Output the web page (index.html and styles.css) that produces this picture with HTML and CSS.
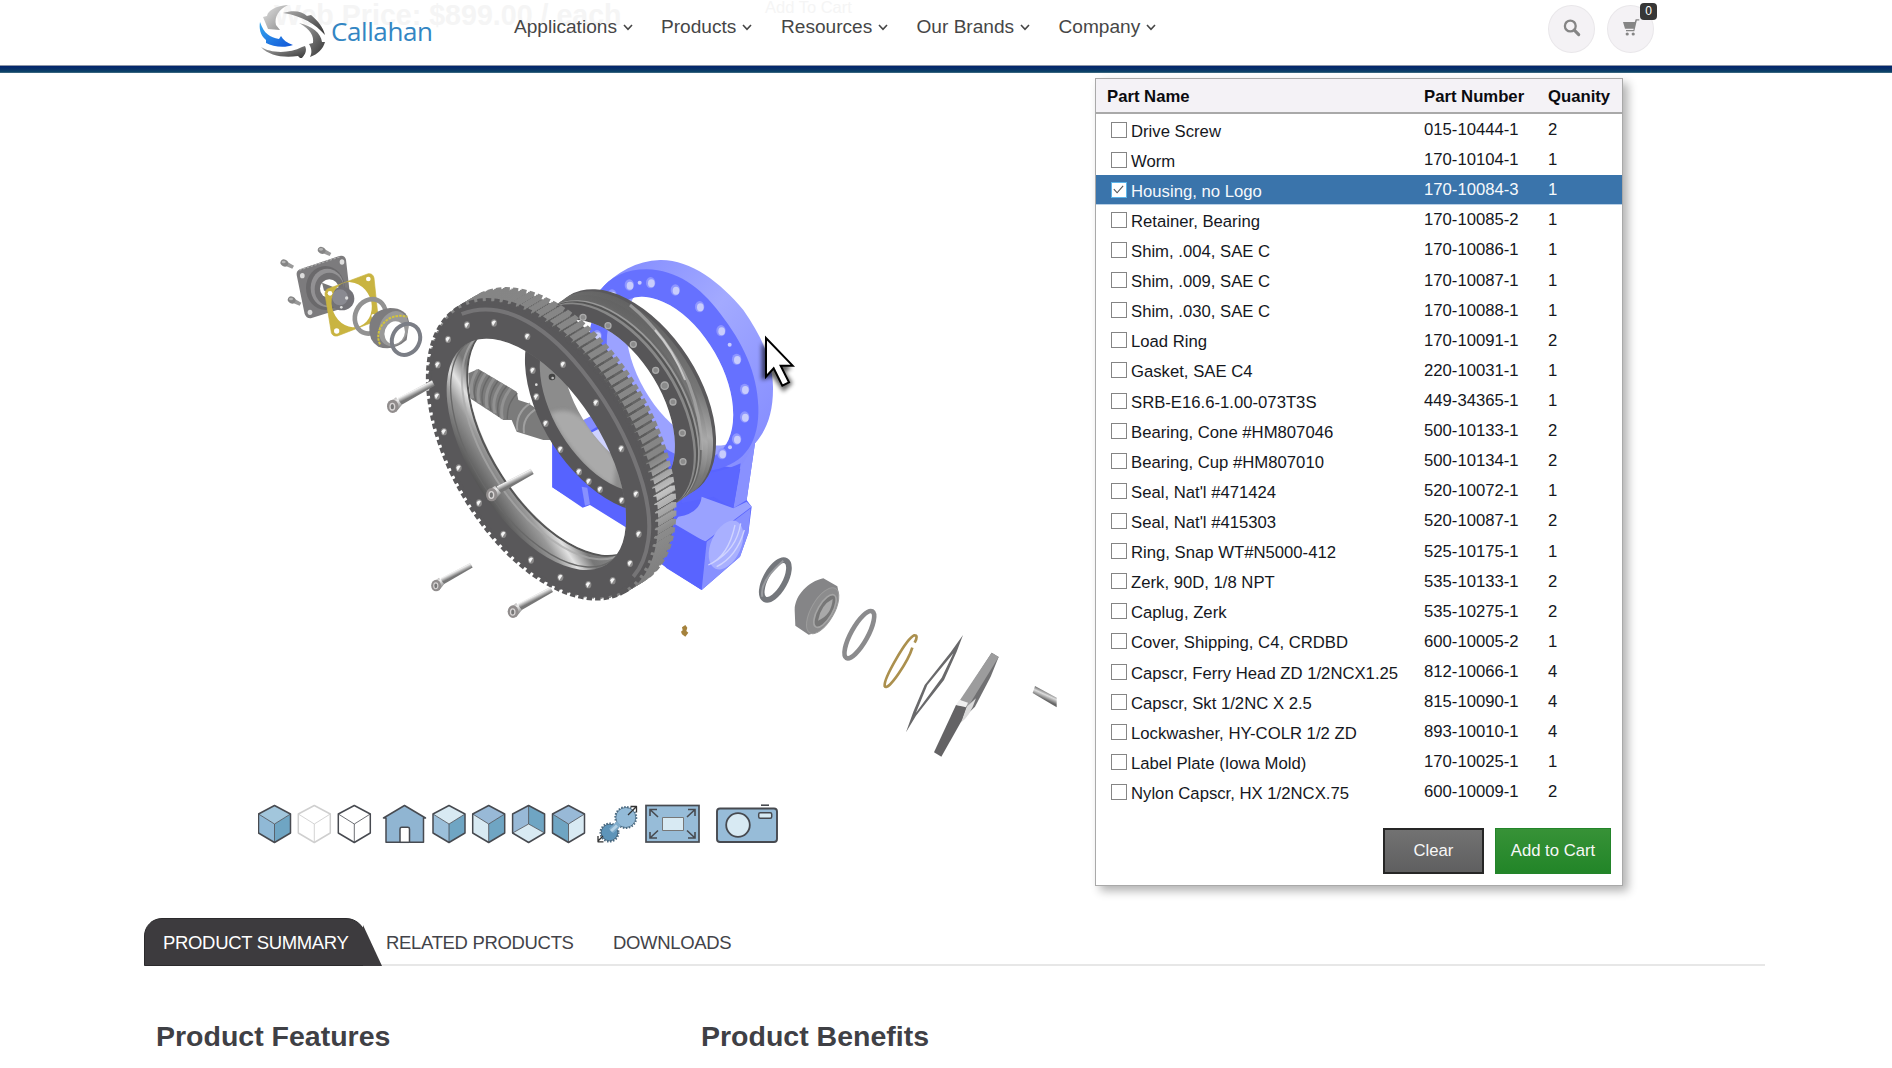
FILE: index.html
```html
<!DOCTYPE html>
<html lang="en">
<head>
<meta charset="utf-8">
<title>Callahan - Product Parts</title>
<link rel="stylesheet" href="styles.css">
</head>
<body>
<header class="site-header">
  <div class="ghost ghost-price">Web Price: $899.00 / each</div>
  <div class="ghost ghost-cart">Add To Cart</div>
  <a class="logo">
    <svg class="logo-mark" viewBox="0 0 68 54">
      <defs>
        <linearGradient id="lg1" x1="0" y1="0" x2="1" y2="1"><stop offset="0" stop-color="#e2e2e2"/><stop offset="1" stop-color="#8a8a8a"/></linearGradient>
        <linearGradient id="lg2" x1="0" y1="0" x2="1" y2="1"><stop offset="0" stop-color="#aaa"/><stop offset="1" stop-color="#333"/></linearGradient>
        <linearGradient id="lg3" x1="0" y1="0" x2="1" y2="1"><stop offset="0" stop-color="#35a8ef"/><stop offset="1" stop-color="#1255d8"/></linearGradient>
      </defs>
      <path d="M29 1C17 2 9 6 8 12L4 13 9 25 21 26 17 21C15 13 20 5 29 1Z" fill="url(#lg1)"/>
      <path d="M24 9C34 6 43 7 48 12L52 11C59 17 64 23 66 31C56 20 44 12 24 9Z" fill="url(#lg2)"/>
      <path d="M40 19C52 26 55 32 54 39L50 40C53 45 53 49 51 53C59 50 64 45 66 38L63 38C62 29 53 22 40 19Z" fill="url(#lg2)"/>
      <path d="M1 18C5 30 11 33 20 35L22 32C24 36 28 39 34 41C26 44 14 43 7 39L7 36C1 31 0 24 1 18Z" fill="url(#lg3)"/>
      <path d="M2 43C11 49 30 50 43 43L46 42C48 46 47 50 42 55L39 52C25 54 10 52 2 43Z" fill="url(#lg2)"/>
    </svg>
    <span class="logo-text">Callahan</span>
  </a>
  <nav class="nav">
    <a class="w1">Applications<svg viewBox="0 0 10 7"><path d="M1 1l4 4.3L9 1"/></svg></a>
    <a class="w2">Products<svg viewBox="0 0 10 7"><path d="M1 1l4 4.3L9 1"/></svg></a>
    <a class="w3">Resources<svg viewBox="0 0 10 7"><path d="M1 1l4 4.3L9 1"/></svg></a>
    <a class="w4">Our Brands<svg viewBox="0 0 10 7"><path d="M1 1l4 4.3L9 1"/></svg></a>
    <a class="w5">Company<svg viewBox="0 0 10 7"><path d="M1 1l4 4.3L9 1"/></svg></a>
  </nav>
  <div class="tools">
    <a class="round"><svg width="18" height="18" viewBox="0 0 18 18"><circle cx="7.3" cy="7" r="5.4" fill="none" stroke="#858585" stroke-width="2.3"/><path d="M11.3 11.2l4.4 4.4" stroke="#858585" stroke-width="3.1" stroke-linecap="round"/></svg></a>
    <a class="round"><svg width="18" height="18" viewBox="0 0 18 18"><path d="M1 3h11.800l.9-2.800h3.600v1.300h-2.500L12.300 12.300H4v-1.300h7.400l.3-1.200H3z" fill="#858585"/><circle cx="5.200" cy="15" r="1.600" fill="#858585"/><circle cx="11.200" cy="15" r="1.600" fill="#858585"/></svg><span class="badge">0</span></a>
  </div>
</header>

<main class="stage">
  <section class="viewer">
    <svg class="model" viewBox="240 73 830 712">
      <defs>
        <linearGradient id="bore" x1="0" y1="0" x2="0" y2="1"><stop offset="0" stop-color="#5d5d5d"/><stop offset=".3" stop-color="#8d8d8d"/><stop offset=".58" stop-color="#777"/><stop offset=".7" stop-color="#e2e2e2"/><stop offset=".8" stop-color="#999"/><stop offset="1" stop-color="#555"/></linearGradient>
        <linearGradient id="bore2" gradientUnits="userSpaceOnUse" x1="-200" y1="-150" x2="60" y2="250"><stop offset="0" stop-color="#777"/><stop offset=".35" stop-color="#8a8a8a"/><stop offset=".6" stop-color="#d0d0d0"/><stop offset=".8" stop-color="#8a8a8a"/><stop offset="1" stop-color="#777"/></linearGradient>
        <linearGradient id="side" x1="0" y1="0" x2="1" y2="1"><stop offset="0" stop-color="#555"/><stop offset=".35" stop-color="#777"/><stop offset=".5" stop-color="#aaa"/><stop offset=".65" stop-color="#777"/><stop offset="1" stop-color="#606060"/></linearGradient>
        <linearGradient id="teeth" x1="0" y1="0" x2="1" y2="0"><stop offset="0" stop-color="#858585"/><stop offset=".4" stop-color="#888"/><stop offset=".7" stop-color="#858585"/><stop offset=".8" stop-color="#c2c2c2"/><stop offset=".9" stop-color="#8c8c8c"/><stop offset="1" stop-color="#808080"/></linearGradient>
        <linearGradient id="bolt" x1="0" y1="0" x2=".5" y2="1"><stop offset="0" stop-color="#8c8888"/><stop offset=".45" stop-color="#eee"/><stop offset="1" stop-color="#777"/></linearGradient>
        <linearGradient id="shank" gradientUnits="userSpaceOnUse" x1="60" y1="-54" x2="70" y2="-34"><stop offset="0" stop-color="#858181"/><stop offset=".4" stop-color="#f2f2f2"/><stop offset="1" stop-color="#777"/></linearGradient>
        <linearGradient id="stub" gradientUnits="userSpaceOnUse" x1="982" y1="486" x2="972" y2="508"><stop offset="0" stop-color="#777"/><stop offset=".4" stop-color="#ddd"/><stop offset="1" stop-color="#666"/></linearGradient>
        <linearGradient id="blueside" x1="0" y1="0" x2="1" y2="1"><stop offset="0" stop-color="#7f88ff"/><stop offset=".45" stop-color="#a3aaff"/><stop offset="1" stop-color="#8088ff"/></linearGradient>
        <filter id="soft" x="-50%" y="-50%" width="200%" height="200%"><feGaussianBlur stdDeviation="7"/></filter>

        <ellipse id="gOut" rx="490" ry="270" transform="rotate(59.800)"/>
        <ellipse id="gIn" rx="392" ry="198" transform="rotate(57.400)"/>
        <ellipse id="rOut" rx="348" ry="201" transform="rotate(57.200)"/>
        <ellipse id="rIn" rx="285" ry="162" transform="rotate(58.700)"/>
        <ellipse id="bIn" rx="268" ry="155" transform="rotate(60)"/>
        <clipPath id="gClip"><use href="#gIn" x="409" y="643"/></clipPath>
        <clipPath id="rClip"><use href="#rIn" x="622" y="498"/></clipPath>
        <clipPath id="bClip"><use href="#bIn" x="810" y="415"/></clipPath>
        <mask id="gMask" maskUnits="userSpaceOnUse" x="0" y="0" width="1300" height="1200"><rect width="1300" height="1200" fill="#fff"/><g clip-path="url(#gClip)"><use href="#gIn" x="474" y="598" fill="#000"/></g></mask>
        <mask id="rMask" maskUnits="userSpaceOnUse" x="0" y="0" width="1300" height="1200"><rect width="1300" height="1200" fill="#fff"/><g clip-path="url(#rClip)"><use href="#rIn" x="687" y="453" fill="#000"/></g></mask>
        <mask id="bMask" maskUnits="userSpaceOnUse" x="0" y="0" width="1300" height="1200"><rect width="1300" height="1200" fill="#fff"/><g clip-path="url(#bClip)"><use href="#bIn" x="868" y="372" fill="#000"/></g></mask>
        <mask id="gasket" maskUnits="userSpaceOnUse" x="200" y="100" width="300" height="300"><rect x="200" y="100" width="300" height="300" fill="#fff"/><ellipse cx="335" cy="254" rx="69" ry="59" transform="rotate(68 335 254)" fill="#000"/></mask>
        <g id="hole"><ellipse rx="9" ry="11" fill="#8a8989"/><path d="M-7-1a8 9 0 0 1 13-4L-3 9z" fill="#f4f4f4"/></g>
        <g id="bhole"><ellipse rx="14" ry="17" fill="#8e96ff"/><ellipse cx="2" cy="2" rx="10" ry="12" fill="#c9cdfc"/></g>
        <g id="screw"><path d="M14-22l102-53 8 16-104 60z" fill="url(#shank)"/><path d="M-16-6L8-24l18 22L8 20z" fill="url(#bolt)"/><ellipse cx="-2" cy="3" rx="17" ry="20" fill="#918d8d"/><ellipse cx="-3" cy="4" rx="9" ry="12" fill="#d8d5d5"/><ellipse cx="-3" cy="4" rx="5" ry="8" fill="#777"/></g>
        <g id="pin"><path d="M3-7l26 15-5 9L-3 6z" fill="#999"/><ellipse rx="12" ry="10" transform="rotate(30)" fill="#858585"/><ellipse cx="-2" cy="-3" rx="6" ry="4" fill="#b5b5b5"/></g>
      </defs>

      <g transform="translate(400 240) scale(.33333)">
        <!-- gearbox housing -->
        <g mask="url(#bMask)">
          <path d="M457 600L580 525 810 540 1090 570 1065 610 1040 780 1055 800 1045 880 1020 950 905 1050 800 985 675 860 570 795 548 803 457 742Z" fill="#5964ff"/>
          <path d="M457 600L580 525 640 600 560 650 550 800 457 742Z" fill="#5663ff"/>
          <path d="M520 555L580 525 600 555 550 585Z" fill="#848cff"/>
          <path d="M550 590L600 565 660 640 640 690Z" fill="#ced2ff"/>
          <path d="M545 740l10 57 15-4-8-50z" fill="#8790ff"/>
          <path d="M600 150C650 95 710 62 780 60C870 58 960 125 1030 210C1090 295 1118 370 1119 440C1120 520 1100 570 1065 610L1040 690 800 650Z" fill="url(#blueside)"/>
          <path d="M600 152C630 110 680 88 740 88C830 90 900 140 960 220C1030 310 1072 400 1075 500C1078 600 1040 670 940 690L740 660C620 560 560 400 570 265Z" fill="#6671ff"/>
          <use href="#bIn" x="810" y="415" fill="#9ba2ff"/>
          <path d="M1065 610L1040 780 1000 805 1022 680Z" fill="#8991ff"/>
          <path d="M840 690C900 715 980 690 1022 670L1000 805 940 770 845 790Z" fill="#5c67ff"/>
          <path d="M835 830Q900 820 905 770L1000 805 1040 785 1055 800 915 905 820 850Z" fill="#9aa2ff"/>
          <path d="M780 850L920 905 905 1050 780 970Z" fill="#5964ff"/>
          <path d="M920 905L1052 805 1045 880 1020 950 905 1050Z" fill="#8790ff"/>
          <ellipse cx="978" cy="915" rx="45" ry="78" transform="rotate(24 978 915)" fill="#a9b0ff"/>
          <path d="M935 970Q1010 930 1022 850M925 975Q985 950 1005 855M950 980Q1010 950 1033 870" fill="none" stroke="#d0d4ff" stroke-width="4"/>
        </g>
        <use href="#bhole" x="688" y="135"/><use href="#bhole" x="752" y="128"/><use href="#bhole" x="826" y="150"/><use href="#bhole" x="899" y="200"/><use href="#bhole" x="963" y="272"/><use href="#bhole" x="1010" y="358"/><use href="#bhole" x="1034" y="448"/><use href="#bhole" x="1034" y="531"/><use href="#bhole" x="1010" y="597"/><use href="#bhole" x="966" y="641"/><use href="#bhole" x="591" y="287"/><use href="#bhole" x="636" y="165"/>
        <g fill="#c6caff"><circle cx="719" cy="128" r="6"/><circle cx="989" cy="314" r="6"/><circle cx="990" cy="622" r="6"/></g>

        <!-- worm shaft -->
        <path d="M205 400L235 387 350 455 355 480 385 490 430 520 470 600 430 600 350 575 335 540 310 540 210 475Z" fill="#7b7b7b"/>
        <path d="M232 390Q205 430 218 475M257 400Q225 445 238 490M282 415Q250 460 262 505M307 430Q272 475 285 520M332 445Q297 490 307 537" fill="none" stroke="#919191" stroke-width="9"/>
        <path d="M244 394Q214 440 227 482M269 408Q237 452 249 496M294 423Q260 468 273 512M320 438Q284 482 296 530M352 460Q320 490 322 538" fill="none" stroke="#686868" stroke-width="4"/>
        <path d="M390 490Q345 520 352 572M412 505Q365 530 372 580" fill="none" stroke="#a0a0a0" stroke-width="6"/>

        <!-- bearing race -->
        <g mask="url(#rMask)">
          <use href="#rOut" x="695" y="460" fill="#5a595b"/>
          <use href="#rOut" x="686" y="466" fill="url(#side)"/>
          <use href="#rOut" x="670" y="477" fill="url(#side)"/>
          <use href="#rOut" x="652" y="489" fill="#686868"/>
          <use href="#rOut" x="646" y="493" fill="#999"/>
          <use href="#rOut" x="641" y="496" fill="#555"/>
          <use href="#rOut" x="635" y="500" fill="#888"/>
          <use href="#rOut" x="628" y="505" fill="#575658"/>
          <ellipse cx="622" cy="498" rx="285" ry="162" transform="rotate(58.700 622 498)" fill="#8c8c8c"/>
          <path d="M450 520C500 500 540 520 570 560L650 660 640 740C570 700 500 620 450 520Z" fill="#c4c4c4" opacity=".55" filter="url(#soft)" clip-path="url(#rClip)"/>
        </g>
        <path d="M690 195Q800 285 866 430Q905 530 905 630" fill="none" stroke="#aaa" stroke-width="9" opacity=".75"/>
        <path d="M765 270Q820 330 855 420" fill="none" stroke="#fff" stroke-width="6" opacity=".5"/>
        <g fill="#8b8b8b" stroke="#aaa" stroke-width="4"><circle cx="549" cy="232" r="9"/><circle cx="624" cy="257" r="9"/><circle cx="700" cy="313" r="9"/><circle cx="767" cy="391" r="9"/><circle cx="794" cy="437" r="11"/><circle cx="819" cy="486" r="9"/><circle cx="847" cy="579" r="9"/><circle cx="849" cy="665" r="9"/></g>
        <use href="#hole" x="398" y="391"/><use href="#hole" x="409" y="470"/><use href="#hole" x="437" y="550"/><use href="#hole" x="481" y="628"/><use href="#hole" x="537" y="695"/><use href="#hole" x="566" y="724"/><use href="#hole" x="600" y="748"/><use href="#hole" x="665" y="781"/>
        <circle cx="409" cy="434" r="4" fill="#ddd"/><circle cx="456" cy="411" r="10" fill="#444"/><circle cx="458" cy="414" r="4" fill="#bbb"/>

        <!-- ring gear -->
        <g mask="url(#gMask)">
          <use href="#gOut" x="482" y="598" fill="#646464"/>
          <use href="#gOut" x="455" y="613" fill="#5c5c5c"/>
          <g fill="none" stroke="url(#teeth)" stroke-width="16" stroke-dasharray="16 9">
            <use href="#gOut" x="482" y="594"/><use href="#gOut" x="477" y="597"/><use href="#gOut" x="472" y="600"/><use href="#gOut" x="467" y="603"/><use href="#gOut" x="462" y="606"/><use href="#gOut" x="457" y="609"/><use href="#gOut" x="452" y="612"/><use href="#gOut" x="447" y="615"/><use href="#gOut" x="442" y="618"/><use href="#gOut" x="437" y="621"/><use href="#gOut" x="432" y="624"/>
          </g>
          <use href="#gOut" x="426" y="628" fill="#59585a"/>
          <use href="#gOut" x="426" y="628" fill="none" stroke="#59585a" stroke-width="18" stroke-dasharray="16 9"/>
          <path d="M185 222C290 180 420 235 545 390C670 545 765 760 745 900Q735 970 700 1010" fill="none" stroke="#757476" stroke-width="12"/>
          <use href="#gIn" x="409" y="643" fill="url(#bore)"/>
          <g fill="none" clip-path="url(#gClip)"><use href="#gIn" x="421" y="634" stroke="#686868" stroke-width="4"/><use href="#gIn" x="455" y="611" stroke="#aaa" stroke-width="6" opacity=".7"/><use href="#gIn" x="471" y="600" stroke="#555" stroke-width="6"/></g>
        </g>
        <use href="#hole" x="201" y="255"/><use href="#hole" x="282" y="249"/><use href="#hole" x="382" y="289"/><use href="#hole" x="489" y="373"/><use href="#hole" x="588" y="488"/><use href="#hole" x="664" y="626"/><use href="#hole" x="708" y="762"/><use href="#hole" x="716" y="882"/><use href="#hole" x="690" y="970"/><use href="#hole" x="638" y="1022"/><use href="#hole" x="565" y="1034"/><use href="#hole" x="481" y="1012"/><use href="#hole" x="393" y="960"/><use href="#hole" x="310" y="883"/><use href="#hole" x="237" y="789"/><use href="#hole" x="176" y="684"/><use href="#hole" x="132" y="575"/><use href="#hole" x="111" y="468"/><use href="#hole" x="113" y="374"/><use href="#hole" x="144" y="298"/>

        <use href="#screw" x="-20" y="496"/><use href="#screw" x="277" y="761"/><use href="#screw" transform="translate(110 1034) scale(.87)"/><use href="#screw" transform="translate(341 1112) scale(.95)"/>
        <path d="M846 1162l10-7 6 8-3 10 6 5-9 12-10-7-3-8 5-4z" fill="#a5823c"/>
      </g>

      <!-- input side cover, gasket and bearing -->
      <g transform="translate(240 220) scale(.33333)">
        <use href="#pin" x="133" y="129"/><use href="#pin" x="245" y="91"/><use href="#pin" x="155" y="240"/>
        <path d="M170 165Q168 152 182 147L298 108Q314 104 318 119L332 242Q332 258 318 262L215 294Q200 297 194 282Z" fill="#7c7b7d"/>
        <path d="M178 150L300 110" stroke="#aaa" stroke-width="4" stroke-dasharray="7 5"/>
        <ellipse cx="256" cy="204" rx="58" ry="66" fill="#6a696b"/><ellipse cx="262" cy="204" rx="50" ry="58" fill="#929193"/><ellipse cx="268" cy="208" rx="44" ry="50" fill="#717072"/><ellipse cx="268" cy="206" rx="28" ry="28" fill="#fff"/>
        <path d="M246 188l32 12-4 16-22-4z" fill="#777"/>
        <ellipse cx="306" cy="236" rx="37" ry="35" fill="#737277"/><ellipse cx="300" cy="232" rx="24" ry="24" fill="#8a8a91"/>
        <g fill="#ddd"><ellipse cx="187" cy="167" rx="7" ry="8"/><ellipse cx="306" cy="126" rx="7" ry="8"/><ellipse cx="210" cy="277" rx="7" ry="8"/><circle cx="320" cy="234" r="5"/><circle cx="304" cy="262" r="4"/></g>
        <path mask="url(#gasket)" fill="#c9b441" stroke="#c9b441" stroke-width="2" d="M255 222Q255 208 268 205L385 161Q399 160 402 174L414 288Q412 302 400 306L292 348Q278 350 274 338Z"/>
        <g fill="#fff"><circle cx="270" cy="220" r="7"/><circle cx="385" cy="177" r="7"/><circle cx="290" cy="333" r="8"/><circle cx="400" cy="288" r="6"/></g>
        <ellipse cx="391" cy="289" rx="45" ry="53" transform="rotate(25 391 289)" fill="none" stroke="#929292" stroke-width="14"/>
        <path d="M388 320Q392 270 450 264Q500 264 507 305L500 360Q460 395 415 380Q385 362 388 320Z" fill="#7d7c7e"/>
        <ellipse cx="461" cy="326" rx="43" ry="54" transform="rotate(22 461 326)" fill="#999"/>
        <path d="M420 373C400 330 440 275 502 290" fill="none" stroke="#d3c43c" stroke-width="6" stroke-dasharray="8 3"/>
        <ellipse cx="464" cy="338" rx="30" ry="35" transform="rotate(20 464 338)" fill="#fff"/>
        <ellipse cx="498" cy="358" rx="41" ry="48" transform="rotate(28 498 358)" fill="none" stroke="#7b7e86" stroke-width="12"/>
      </g>

      <!-- output side rings, seals and plates -->
      <g transform="translate(720 530) scale(.33333)">
        <ellipse cx="166" cy="150" rx="66" ry="29" transform="rotate(-61 166 150)" fill="none" stroke="#74777c" stroke-width="17"/>
        <path d="M127 200Q117 155 190 92" fill="none" stroke="#999b9f" stroke-width="6"/>
        <path d="M224 240C225 195 265 155 310 145L352 169Q362 195 340 235C320 285 295 310 266 314L226 287Z" fill="#858587"/>
        <ellipse cx="308" cy="242" rx="77" ry="34" transform="rotate(-60 308 242)" fill="#8c8c8d" stroke="#9c9c9c" stroke-width="3"/>
        <ellipse cx="315" cy="243" rx="55" ry="22" transform="rotate(-60 315 243)" fill="#777" stroke="#a5a5a5" stroke-width="5"/>
        <path d="M294 272Q302 225 338 207Q335 255 294 272Z" fill="#a9a9a9"/>
        <ellipse cx="418" cy="314" rx="80" ry="25" transform="rotate(-61 418 314)" fill="none" stroke="#8b8b8d" stroke-width="14"/>
        <path d="M584 338Q596 315 583 316C560 325 491 445 494 468C505 487 566 390 577 353" fill="none" stroke="#ab904e" stroke-width="8"/>
        <path fill-rule="evenodd" fill="#69696b" d="M729 315L710 365 672 450 588 557 558 607 580 545 614 465 692 367ZM700 370L622 465 588 548 665 443Z"/>
        <path d="M815 368L836 381 812 440 765 530 722 572 722 512Z" fill="#707072"/>
        <path d="M815 368L836 381 744 530 720 510Z" fill="#9c9c9d"/>
        <path d="M768 505Q750 560 722 578L740 530Z" fill="#dadada"/>
        <path d="M708 525L740 528 725 572 664 680 642 667Z" fill="#646365"/>
        <path d="M708 525L718 509 744 518 738 532Z" fill="#efefef"/>
        <path d="M945 468L1010 503V532L938 489Z" fill="url(#stub)"/>
      </g>

      <g transform="translate(400 240) scale(.33333)">
        <path d="M1085 310V420L1118 410 1150 455 1178 430 1155 395 1175 385Z" fill="#000" opacity=".6" filter="url(#soft)"/>
        <path d="M1098 294V410L1121 385 1147 437 1167 427 1142 377H1178Z" fill="#fff" stroke="#000" stroke-width="6"/>
      </g>
    </svg>

    <div class="toolbar">
      <svg viewBox="258 804 522 40" width="522" height="40">
        <defs>
          <g id="cube" stroke-linejoin="round"><path d="M0 9.500L16 1 32 9.500V28.500L16 38 0 28.500Z" fill="none" stroke-width="1.500"/></g>
        </defs>
        <g stroke="#474a50" stroke-linejoin="round">
          <g transform="translate(258.500 804.500)"><path d="M0 9.500L16 19.500V38L0 28.500Z" fill="#90b9d6" stroke="none"/><path d="M32 9.500L16 19.500V38L32 28.500Z" fill="#6fa5c3" stroke="none"/><path d="M0 9.500L16 1 32 9.500 16 19.500Z" fill="#a2c6dc" stroke="none"/><path d="M0 9.500L16 19.500 32 9.500M16 19.500V38" fill="none" stroke-width=".8"/><use href="#cube"/></g>
          <g transform="translate(298.300 804.500)" stroke="#cfcfcf"><path d="M0 9.500L16 19.500 32 9.500M16 19.500V38" fill="none" stroke-width=".9"/><use href="#cube"/></g>
          <g transform="translate(338.300 804.500)"><path d="M0 9.500L16 19.500 32 9.500M16 19.500V38" fill="none" stroke-width=".8"/><use href="#cube"/></g>
          <path d="M386 842.300V818H383.500L404.500 805.500 425.500 818H423.500V842.300H409.500V829Q409.500 827.300 407.800 827.300H401.700Q400 827.300 400 829V842.300Z" fill="#90b5d2" stroke-width="1.500"/>
          <path d="M400 842.300h9.500" stroke-width="1.500"/>
          <g transform="translate(433 804.500)"><path d="M0 9.500L16 19.500V38L0 28.500Z" fill="#9bbfda" stroke="none"/><path d="M32 9.500L16 19.500V38L32 28.500Z" fill="#6fa5c3" stroke="none"/><path d="M0 9.500L16 1 32 9.500 16 19.500Z" fill="#d8eaf3" stroke="none"/><path d="M0 9.500L16 19.500 32 9.500M16 19.500V38" fill="none" stroke-width=".8"/><use href="#cube"/></g>
          <g transform="translate(472.700 804.500)"><path d="M0 9.500L16 19.500V38L0 28.500Z" fill="#d8eaf3" stroke="none"/><path d="M32 9.500L16 19.500V38L32 28.500Z" fill="#6fa5c3" stroke="none"/><path d="M0 9.500L16 1 32 9.500 16 19.500Z" fill="#98b9d7" stroke="none"/><path d="M0 9.500L16 19.500 32 9.500M16 19.500V38" fill="none" stroke-width=".8"/><use href="#cube"/></g>
          <g transform="translate(512.600 804.500)"><path d="M0 9.500L16 1V19.500L0 28.500Z" fill="#98b9d7" stroke="none"/><path d="M32 9.500L16 1V19.500L32 28.500Z" fill="#6fa5c3" stroke="none"/><path d="M0 28.500L16 19.500 32 28.500 16 38Z" fill="#d8eaf3" stroke="none"/><path d="M0 28.500L16 19.500 32 28.500M16 19.500V1" fill="none" stroke-width=".8"/><use href="#cube"/></g>
          <g transform="translate(552.500 804.500)"><path d="M0 9.500L16 19.500V38L0 28.500Z" fill="#6fa5c3" stroke="none"/><path d="M32 9.500L16 19.500V38L32 28.500Z" fill="#d8eaf3" stroke="none"/><path d="M0 9.500L16 1 32 9.500 16 19.500Z" fill="#98b9d7" stroke="none"/><path d="M0 9.500L16 19.500 32 9.500M16 19.500V38" fill="none" stroke-width=".8"/><use href="#cube"/></g>
          <!-- explode view -->
          <g fill="#5d94b9" stroke="#46677f"><circle cx="609.500" cy="832.500" r="8.300"/><circle cx="609.500" cy="832.500" r="9" fill="none" stroke-width="2" stroke-dasharray="1.500 1.500"/></g>
          <g fill="#93bbd8" stroke="#46677f" stroke-width=".8"><circle cx="625.800" cy="817.500" r="10"/><circle cx="625.800" cy="817.500" r="10.600" fill="none" stroke-width="1.800" stroke-dasharray="1.500 1.500"/></g>
          <path d="M611 831l8-7.500" stroke="#7faccb" stroke-width="6"/><path d="M611 831l6-5.500" stroke="#b3d1e5" stroke-width="3"/>
          <path d="M628 815l8.500-8.500M630.500 806.500H636.500V812.500M603 836l-5 5M598 836V841.800H603.500" fill="none" stroke="#333" stroke-width="1.300"/>
          <!-- zoom to fit -->
          <rect x="646" y="805.500" width="53" height="36.500" fill="#97bcd8" stroke-width="1.700" stroke-linejoin="miter"/>
          <rect x="662.500" y="817.500" width="21" height="13" fill="#d8eaf3" stroke="#777" stroke-width="1"/>
          <path d="M650 816V809.500H657M650 809.500L658 817M688 809.500H695V816M695 809.500L687 817M650 832V838H657M650 838L658 830.500M695 832V838H688M695 838L687 830.500" fill="none" stroke-width="1.600" stroke-linejoin="miter"/>
          <!-- snapshot -->
          <rect x="717" y="808.500" width="60" height="33.500" rx="3" fill="#97bcd8" stroke-width="1.900"/>
          <circle cx="738" cy="825" r="11.800" fill="#d8eaf3" stroke-width="1.800"/>
          <rect x="758.700" y="812.800" width="13" height="5.500" rx="1.500" fill="#d8eaf3" stroke-width="1.500"/>
          <path d="M761 805.200h8" stroke-width="1.600"/>
        </g>
      </svg>
    </div>
  </section>

  <aside class="parts">
    <div class="row head"><span>Part Name</span><span>Part Number</span><span>Quanity</span></div>
    <div class="rows">
      <label class="row"><span class="name"><i class="box"></i>Drive Screw</span><span>015-10444-1</span><span>2</span></label>
      <label class="row"><span class="name"><i class="box"></i>Worm</span><span>170-10104-1</span><span>1</span></label>
      <label class="row selected"><span class="name"><i class="box"><svg viewBox="0 0 14 14"><path d="M2 6.500l3.500 4L12 3"/></svg></i>Housing, no Logo</span><span>170-10084-3</span><span>1</span></label>
      <label class="row"><span class="name"><i class="box"></i>Retainer, Bearing</span><span>170-10085-2</span><span>1</span></label>
      <label class="row"><span class="name"><i class="box"></i>Shim, .004, SAE C</span><span>170-10086-1</span><span>1</span></label>
      <label class="row"><span class="name"><i class="box"></i>Shim, .009, SAE C</span><span>170-10087-1</span><span>1</span></label>
      <label class="row"><span class="name"><i class="box"></i>Shim, .030, SAE C</span><span>170-10088-1</span><span>1</span></label>
      <label class="row"><span class="name"><i class="box"></i>Load Ring</span><span>170-10091-1</span><span>2</span></label>
      <label class="row"><span class="name"><i class="box"></i>Gasket, SAE C4</span><span>220-10031-1</span><span>1</span></label>
      <label class="row"><span class="name"><i class="box"></i>SRB-E16.6-1.00-073T3S</span><span>449-34365-1</span><span>1</span></label>
      <label class="row"><span class="name"><i class="box"></i>Bearing, Cone #HM807046</span><span>500-10133-1</span><span>2</span></label>
      <label class="row"><span class="name"><i class="box"></i>Bearing, Cup #HM807010</span><span>500-10134-1</span><span>2</span></label>
      <label class="row"><span class="name"><i class="box"></i>Seal, Nat'l #471424</span><span>520-10072-1</span><span>1</span></label>
      <label class="row"><span class="name"><i class="box"></i>Seal, Nat'l #415303</span><span>520-10087-1</span><span>2</span></label>
      <label class="row"><span class="name"><i class="box"></i>Ring, Snap WT#N5000-412</span><span>525-10175-1</span><span>1</span></label>
      <label class="row"><span class="name"><i class="box"></i>Zerk, 90D, 1/8 NPT</span><span>535-10133-1</span><span>2</span></label>
      <label class="row"><span class="name"><i class="box"></i>Caplug, Zerk</span><span>535-10275-1</span><span>2</span></label>
      <label class="row"><span class="name"><i class="box"></i>Cover, Shipping, C4, CRDBD</span><span>600-10005-2</span><span>1</span></label>
      <label class="row"><span class="name"><i class="box"></i>Capscr, Ferry Head ZD 1/2NCX1.25</span><span>812-10066-1</span><span>4</span></label>
      <label class="row"><span class="name"><i class="box"></i>Capscr, Skt 1/2NC X 2.5</span><span>815-10090-1</span><span>4</span></label>
      <label class="row"><span class="name"><i class="box"></i>Lockwasher, HY-COLR 1/2 ZD</span><span>893-10010-1</span><span>4</span></label>
      <label class="row"><span class="name"><i class="box"></i>Label Plate (Iowa Mold)</span><span>170-10025-1</span><span>1</span></label>
      <label class="row"><span class="name"><i class="box"></i>Nylon Capscr, HX 1/2NCX.75</span><span>600-10009-1</span><span>2</span></label>
    </div>
    <div class="actions"><button class="btn clear">Clear</button><button class="btn add">Add to Cart</button></div>
  </aside>
</main>

<section class="details">
  <div class="tabs">
    <a class="tab active">PRODUCT SUMMARY</a>
    <svg class="slant" viewBox="0 0 19 48" preserveAspectRatio="none"><path d="M0 7L19 48H0Z" fill="#3d3b3e"/></svg>
    <a class="tab related">RELATED PRODUCTS</a>
    <a class="tab downloads">DOWNLOADS</a>
  </div>
  <div class="columns"><h2>Product Features</h2><h2>Product Benefits</h2></div>
</section>
</body>
</html>
```
FILE: styles.css
```css
* { box-sizing: border-box; }
body {
  margin: 0;
  width: 1892px;
  height: 1068px;
  overflow: hidden;
  background: #fff;
  font-family: "Liberation Sans", Arial, sans-serif;
}

/* header */
.site-header {
  position: relative;
  height: 73px;
  display: flex;
  align-items: flex-start;
  padding-left: 259px;
}
.site-header::after {
  content: "";
  position: absolute;
  left: 0; right: 0; bottom: 0;
  height: 8px;
  background: linear-gradient(#8e97a8 0, #8e97a8 1px, #04266d 1px, #073069 4px, #0d4668 7px, #5d7f93 8px);
}
.ghost { position: absolute; color: #f5f5f5; white-space: nowrap; line-height: 1; }
.ghost-price { left: 274px; top: 1px; font-size: 28.6px; font-weight: bold; }
.ghost-cart { left: 765px; top: -1px; font-size: 16.5px; }
.logo { position: relative; display: flex; width: 255px; padding-top: 4px; }
.logo-mark { width: 68px; height: 54px; flex: none; }
.logo-text {
  margin: 9px 0 0 4px;
  font: 26px/36px "Open Sans", "Noto Sans", sans-serif;
  letter-spacing: -.4px;
  color: #3386c3;
}
.nav { position: relative; display: flex; width: 1034px; font-size: 19.1px; line-height: 22px; color: #464646; padding-top: 16px; }
.nav a { white-space: nowrap; }
.nav svg { width: 10px; height: 7px; margin: 0 0 2px 6px; fill: none; stroke: #464646; stroke-width: 1.6; }
.w1 { width: 147px; } .w2 { width: 120px; } .w3 { width: 135.5px; } .w4 { width: 142px; }
.tools { display: flex; gap: 12px; padding-top: 5px; }
.round {
  position: relative;
  display: flex;
  width: 47px; height: 48px;
  align-items: center;
  justify-content: center;
  padding-bottom: 3px;
  border: 1px solid #e9e7ea;
  border-radius: 50%;
  background: #f4f2f5;
}
.badge {
  position: absolute;
  right: -4px; top: -3px;
  width: 17px; height: 17px;
  border-radius: 4px;
  background: #363636;
  color: #fff;
  font-size: 12px;
  line-height: 17px;
  text-align: center;
}

/* viewer */
.stage { display: flex; height: 845px; padding-left: 240px; }
.viewer { width: 855px; }
.model { display: block; width: 830px; height: 712px; }
.toolbar { padding: 19px 0 0 18px; }
.toolbar svg { display: block; }

/* parts list */
.parts {
  width: 528px;
  height: 808px;
  margin-top: 5px;
  border: 1px solid #a9a9a9;
  box-shadow: 5px 5px 9px rgba(0, 0, 0, .3);
  background: #fff;
  color: #15171d;
  font-size: 16.7px;
}
.row {
  display: grid;
  grid-template-columns: 317px 124px 1fr;
  height: 30.12px;
  align-items: center;
  padding-left: 11px;
  white-space: nowrap;
}
.row > span { position: relative; top: 0; }
.row .name { display: flex; align-items: center; gap: 4px; padding-left: 4px; top: 1px; line-height: 26px; padding-top: 1px; }
.row.head { height: 35px; background: #f4f2f6; border-bottom: 2px solid #a9a9a9; font-weight: bold; color: #0b0b10; }
.row.head > span { top: 1px; }
.rows { padding-top: 1px; }
.box { width: 16px; height: 16px; flex: none; margin-bottom: 4px; border: 1.5px solid #858585; background: #fff; }
.box svg { display: block; width: 13px; height: 13px; fill: none; stroke: #555; stroke-width: 1.2; }
.selected { background: #3a74ab; color: #f6f9fc; box-shadow: inset 0 -1px #b9d0e6; }
.selected .box { border-color: #5cb5ea; }
.actions { display: flex; justify-content: flex-end; gap: 11px; padding: 20px 11px 0 0; }
.btn { height: 46px; padding: 0; font: 16.7px "Liberation Sans", Arial, sans-serif; color: #f7f7f7; }
.clear { width: 101px; background: linear-gradient(#727272, #5f5f60); border: 2px solid #262626; }
.add { width: 116px; background: linear-gradient(#379237, #228528); border: 1px solid #23842a; }

/* tabs */
.details { padding-left: 144px; }
.tabs { display: flex; width: 1621px; height: 48px; border-bottom: 2px solid #e7e7e7; }
.tab { height: 48px; font-size: 18.5px; letter-spacing: -.33px; line-height: 49px; color: #434349; white-space: nowrap; }
.active { width: 222px; padding-left: 18px; border: 1px solid #2b2a2c; border-radius: 18px 20px 0 0; background: #3d3b3e; color: #fff; line-height: 47px; }
.slant { width: 19px; height: 48px; flex: none; margin-left: -3px; }
.related { width: 227px; margin-left: 4px; }
.columns { display: grid; grid-template-columns: 545px 1fr; padding: 53px 0 0 12px; }
h2 { margin: 0; font-size: 28.5px; line-height: 34px; color: #3f4045; }
```
